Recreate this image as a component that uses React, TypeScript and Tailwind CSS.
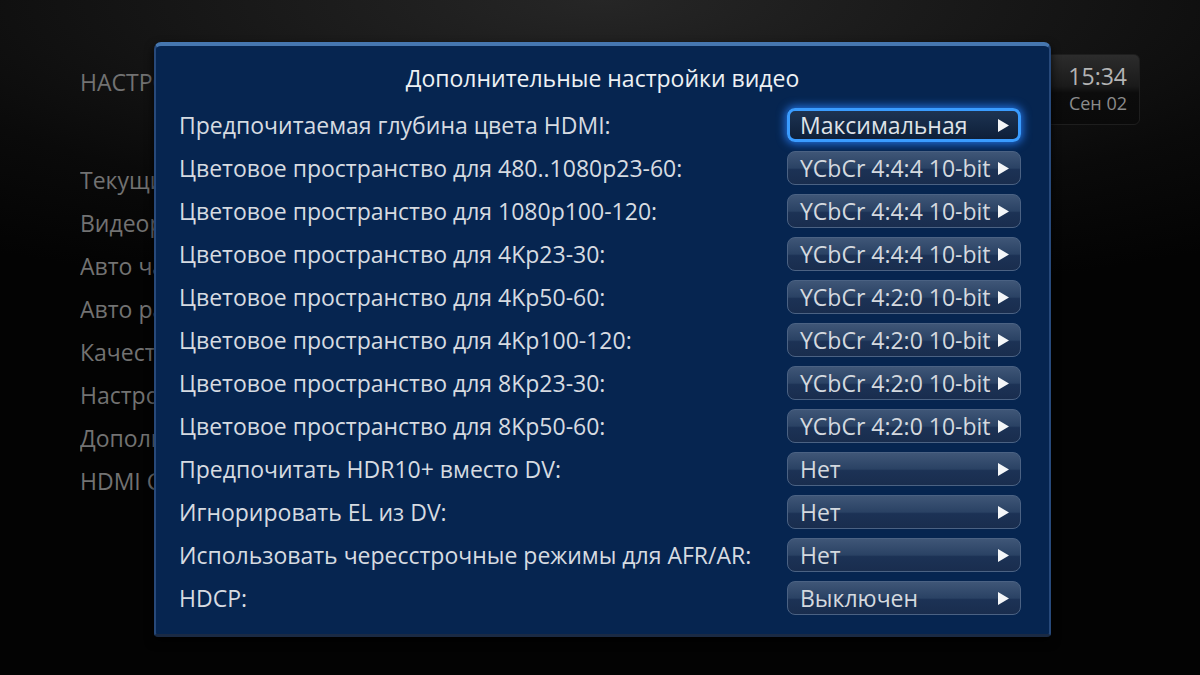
import React from "react";

const rows: [string, string, boolean?][] = [
  ["Предпочитаемая глубина цвета HDMI:", "Максимальная", true],
  ["Цветовое пространство для 480..1080p23-60:", "YCbCr 4:4:4 10-bit"],
  ["Цветовое пространство для 1080p100-120:", "YCbCr 4:4:4 10-bit"],
  ["Цветовое пространство для 4Kp23-30:", "YCbCr 4:4:4 10-bit"],
  ["Цветовое пространство для 4Kp50-60:", "YCbCr 4:2:0 10-bit"],
  ["Цветовое пространство для 4Kp100-120:", "YCbCr 4:2:0 10-bit"],
  ["Цветовое пространство для 8Kp23-30:", "YCbCr 4:2:0 10-bit"],
  ["Цветовое пространство для 8Kp50-60:", "YCbCr 4:2:0 10-bit"],
  ["Предпочитать HDR10+ вместо DV:", "Нет"],
  ["Игнорировать EL из DV:", "Нет"],
  ["Использовать чересстрочные режимы для AFR/AR:", "Нет"],
  ["HDCP:", "Выключен"],
];

const menu = [
  "Текущий видеорежим",
  "Видеорежим",
  "Авто частота кадров",
  "Авто разрешение",
  "Качество изображения",
  "Настройки экрана",
  "Дополнительные настройки",
  "HDMI CEC",
];

function Tri() {
  return (
    <svg width="13" height="15" viewBox="0 0 13 15" className="shrink-0">
      <path d="M1 1 L12 7.5 L1 14 Z" fill="#f4f6f8" />
    </svg>
  );
}

export default function App() {
  return (
    <div
      className="relative w-[1200px] h-[675px] overflow-hidden bg-[radial-gradient(ellipse_90%_45%_at_50%_0%,#262626,#0a0a0a_70%,#030303)] text-[23px]"
      style={{ fontFamily: '"Open Sans", "Noto Sans", sans-serif' }}
    >
      {/* left menu */}
      <div className="flex flex-col ml-[80px] w-[74px] overflow-hidden pt-[66px] text-[#727272]">
        <div className="h-[32px] leading-[32px] whitespace-nowrap">НАСТРОЙКИ</div>
        <div className="mt-[61px] flex flex-col">
          {menu.map((m) => (
            <div key={m} className="h-[43px] leading-[43px] whitespace-nowrap">
              {m}
            </div>
          ))}
        </div>
      </div>

      {/* clock */}
      <div className="absolute left-[1000px] top-[54px] w-[140px] h-[71px] rounded-[6px] bg-[linear-gradient(#2c2c2c,#1a1a1a_45%,#0c0c0c_55%,#0a0a0a)] border border-[#1e1e1e] flex flex-col items-end pr-[12px]">
        <div className="text-[23px] leading-[30px] mt-[6px] text-[#b4b4b4]">15:34</div>
        <div className="text-[18px] leading-[24px] text-[#8c8c8c]">Сен 02</div>
      </div>

      {/* dialog */}
      <div className="absolute left-[154px] top-[42px] w-[897px] h-[595px] rounded-t-[7px] rounded-b-[4px] bg-[#062550] border-t-[4px] border-t-[#4677b0] border-x-2 border-x-[#27497a] border-b-[3px] border-b-[#1a2a44] shadow-[0_4px_10px_rgba(0,0,0,0.8)] flex flex-col">
        <div className="h-[32px] mt-[16px] leading-[32px] text-center text-[#eef1f4]">
          Дополнительные настройки видео
        </div>
        <div className="flex flex-col gap-[9px] mt-[14px] pl-[23px] pr-[28px]">
          {rows.map(([label, value, focused]) => (
            <div key={label} className="flex items-center justify-between h-[34px]">
              <div className="text-[#d6dbe1] whitespace-nowrap">{label}</div>
              <div
                className={
                  focused
                    ? "w-[234px] h-[34px] rounded-[8px] border-[3px] border-[#3a9cff] shadow-[0_0_8px_2px_rgba(40,130,255,0.8)] bg-[linear-gradient(#1d3352,#0e1f38)] flex items-center justify-between pl-[10px] pr-[8px] text-[#dfe3e8]"
                    : "w-[234px] h-[34px] rounded-[8px] border border-[#4b6283] bg-[linear-gradient(#3f5677,#2a4264_50%,#1c3255_55%,#192d4e)] flex items-center justify-between pl-[12px] pr-[10px] text-[#d4d9df]"
                }
              >
                <span className="whitespace-nowrap leading-none">{value}</span>
                <Tri />
              </div>
            </div>
          ))}
        </div>
      </div>
    </div>
  );
}
